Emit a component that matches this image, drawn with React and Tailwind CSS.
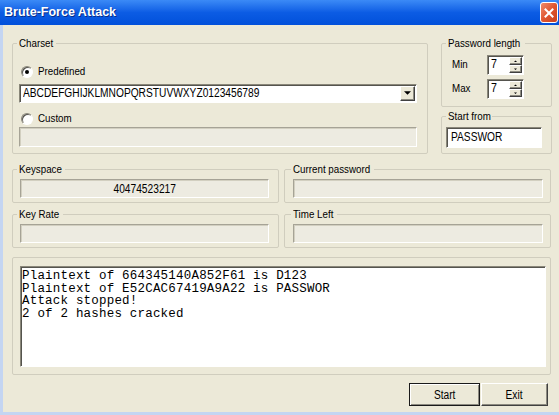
import React from 'react';

const ui = "font-['Liberation_Sans',Arial,sans-serif]";

// classic 3D edges
const sunken = 'border border-t-[#8A877A] border-l-[#8A877A] border-b-white border-r-white shadow-[inset_1px_1px_0_#55544E]';
const sunkenFlat = 'border border-t-[#A6A396] border-l-[#A6A396] border-b-white border-r-white shadow-[inset_1px_1px_0_#D2CFC0] bg-[#EDEBE1]';
const raised = 'border border-t-white border-l-white border-b-[#404040] border-r-[#404040] shadow-[inset_-1px_-1px_0_#8C8A80] bg-[#ECE9D8]';

// the dialog font is narrow (Tahoma-like), so squeeze Liberation Sans a bit
const T = ({ center, className = '', children }) => (
  <span className={`inline-block whitespace-nowrap scale-x-[0.85] ${center ? 'origin-center' : 'origin-left'} ${className}`}>
    {children}
  </span>
);

const Group = ({ label, lw = '', lm = 'ml-[4px]', className = '', children }) => (
  <fieldset className={`border border-[#D0CDBE] rounded-[2px] ${className}`}>
    {label && (
      <legend className={`${lm} px-[2px] text-[11.5px] leading-[13px] text-black`}>
        <T className={lw}>{label}</T>
      </legend>
    )}
    {children}
  </fieldset>
);

const Radio = ({ checked }) => (
  <span className="w-[12px] h-[12px] rounded-full border border-t-[#8A877A] border-l-[#8A877A] border-b-white border-r-white bg-white shadow-[inset_1px_1px_0_#55544E] flex items-center justify-center">
    {checked && <span className="w-[4px] h-[4px] rounded-full bg-black" />}
  </span>
);

const Arrow = ({ up, size = 7 }) => (
  <svg width={size} height={Math.ceil(size / 2) + 1} viewBox="0 0 8 5">
    {up ? <polygon points="0,4 8,4 4,0" fill="#000" /> : <polygon points="0,0 8,0 4,4" fill="#000" />}
  </svg>
);

const Spinner = ({ value }) => (
  <div className={`w-[37px] h-[20px] flex bg-white ${sunken}`}>
    <span className="flex-1 pl-[3px] text-[12.5px] leading-[17px]">
      <T>{value}</T>
    </span>
    <div className="w-[13px] m-[1px] flex flex-col">
      <div className={`flex-1 flex items-center justify-center ${raised}`}>
        <Arrow up size={3} />
      </div>
      <div className={`flex-1 flex items-center justify-center ${raised}`}>
        <Arrow size={3} />
      </div>
    </div>
  </div>
);

const Field = ({ className = '', children }) => (
  <div className={`h-[19px] flex items-center justify-center text-[12px] ${sunkenFlat} ${className}`}>{children}</div>
);

export default function App() {
  const log = [
    'Plaintext of 664345140A852F61 is D123',
    'Plaintext of E52CAC67419A9A22 is PASSWOR',
    'Attack stopped!',
    '2 of 2 hashes cracked',
  ];

  return (
    <div className={`w-[559px] h-[415px] bg-[#C4D5F2] flex flex-col overflow-hidden text-black ${ui}`}>
      {/* Title bar */}
      <div className="h-[25px] flex items-center justify-between pl-[4px] pr-[1px] bg-gradient-to-b from-[#3B8AF6] via-[#0C5CE4] to-[#0250DA]">
        <span className="font-bold text-[12.5px] text-white [text-shadow:1px_1px_0_#0A2E8A]">Brute-Force Attack</span>
        <div className="w-[18px] h-[21px] rounded-[3px] border border-white bg-gradient-to-br from-[#EE8A6A] via-[#E0552F] to-[#C8401E] flex items-center justify-center">
          <svg width="10" height="10" viewBox="0 0 10 10">
            <path d="M1.5 1.5 L8.5 8.5 M8.5 1.5 L1.5 8.5" stroke="#fff" strokeWidth="2" strokeLinecap="square" />
          </svg>
        </div>
      </div>

      {/* Dialog body */}
      <div className="flex-1 ml-[3px] mb-[3px] bg-[#ECE9D8] pl-[9px] pt-[12px] flex flex-col">
        <div className="flex gap-[13px]">
          <Group label="Charset" lw="w-[35px]" className="w-[416px] h-[117px]">
            <div className="px-[6px]">
              <div className="mt-[15px] ml-[2px] flex items-center gap-[5px] text-[11.5px] leading-[13px]">
                <Radio checked />
                <T>Predefined</T>
              </div>
              <div className={`mt-[6px] w-[398px] h-[19px] flex bg-white ${sunken}`}>
                <span className="flex-1 pl-[3px] text-[12px] leading-[17px]">
                  <T>ABCDEFGHIJKLMNOPQRSTUVWXYZ0123456789</T>
                </span>
                <div className={`w-[15px] m-[1px] flex items-center justify-center ${raised}`}>
                  <Arrow size={7} />
                </div>
              </div>
              <div className="mt-[9px] ml-[2px] flex items-center gap-[5px] text-[11.5px] leading-[13px]">
                <Radio />
                <T>Custom</T>
              </div>
              <Field className="mt-[2px] w-[398px] h-[20px]" />
            </div>
          </Group>

          <div className="w-[111px] flex flex-col gap-[3px]">
            <Group label="Password length" lw="w-[75px]" className="h-[70px]">
              <div className="pl-[10px] mt-[5px] flex flex-col gap-[4px] text-[11.5px]">
                <div className="flex items-center">
                  <span className="w-[35px]">
                    <T>Min</T>
                  </span>
                  <Spinner value="7" />
                </div>
                <div className="flex items-center">
                  <span className="w-[35px]">
                    <T>Max</T>
                  </span>
                  <Spinner value="7" />
                </div>
              </div>
            </Group>
            <Group label="Start from" lw="w-[42px]" className="h-[44px]">
              <div className="pl-[4px]">
                <div className={`mt-[4px] w-[96px] h-[21px] bg-white pl-[4px] text-[12px] leading-[19px] ${sunken}`}>
                  <T>PASSWOR</T>
                </div>
              </div>
            </Group>
          </div>
        </div>

        <div className="mt-[9px] flex gap-[5px]">
          <Group label="Keyspace" lw="w-[44px]" className="w-[267px] h-[40px]">
            <div className="pl-[7px]">
              <Field className="mt-[3px] w-[249px]">
                <T center>40474523217</T>
              </Field>
            </div>
          </Group>
          <Group label="Current password" lw="w-[79px]" lm="ml-[6px]" className="w-[267px] h-[40px]">
            <div className="pl-[8px]">
              <Field className="mt-[3px] w-[250px]" />
            </div>
          </Group>
        </div>

        <div className="mt-[5px] flex gap-[5px]">
          <Group label="Key Rate" lw="w-[42px]" className="w-[267px] h-[40px]">
            <div className="pl-[7px]">
              <Field className="mt-[3px] w-[249px]" />
            </div>
          </Group>
          <Group label="Time Left" lw="w-[42px]" lm="ml-[6px]" className="w-[267px] h-[40px]">
            <div className="pl-[8px]">
              <Field className="mt-[3px] w-[250px]" />
            </div>
          </Group>
        </div>

        <div className="mt-[9px] w-[539px] h-[118px] border border-[#D0CDBE] rounded-[2px] pl-[7px] pt-[8px]">
          <div className={`w-[526px] h-[101px] bg-white pt-[3px] pl-[1px] font-['Liberation_Mono','Courier_New',monospace] text-[12.5px] leading-[12.5px] tracking-[0.2px] whitespace-pre ${sunken}`}>
            {log.map((l) => (
              <div key={l}>{l}</div>
            ))}
          </div>
        </div>

        <div className="mt-[8px] w-[539px] pr-[3px] flex justify-end gap-[1px] text-[12px]">
          <button className="w-[71px] h-[23px] border border-[#1A1A1A] bg-[#ECE9D8] shadow-[inset_1px_1px_0_#fff,inset_-1px_-1px_0_#8C8A80]">
            <T center>Start</T>
          </button>
          <button className={`w-[67px] h-[23px] ${raised}`}>
            <T center>Exit</T>
          </button>
        </div>
      </div>
    </div>
  );
}
